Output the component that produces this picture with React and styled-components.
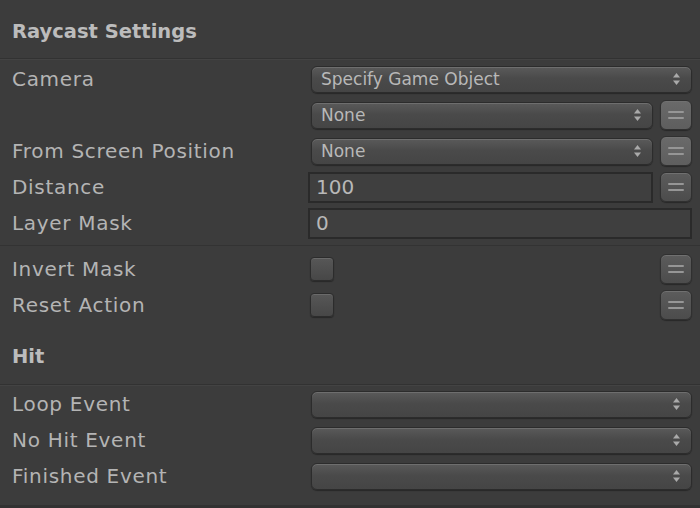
import React from "react";
import styled, { createGlobalStyle } from "styled-components";

const Global = createGlobalStyle`
  html, body {
    margin: 0;
    padding: 0;
    background: #3c3c3c;
  }
  body {
    font-family: "DejaVu Sans", "Liberation Sans", sans-serif;
    color: #b4b4b4;
  }
`;

const Panel = styled.div`
  width: 700px;
  height: 508px;
  background: #3c3c3c;
  display: flex;
  flex-direction: column;
  overflow: hidden;
  box-sizing: border-box;
  border-bottom: 3px solid #323232;
`;

const SectionHeader = styled.div`
  height: ${(p) => p.h}px;
  padding: ${(p) => p.pt}px 12px 0;
  box-sizing: border-box;
  display: flex;
  align-items: center;
  font-weight: bold;
  font-size: 19.5px;
  color: #bcbcbc;
  border-bottom: 1px solid #323232;
  box-shadow: 0 1px 0 #434343;
`;

const Group = styled.div`
  display: flex;
  flex-direction: column;
  padding: ${(p) => p.pad};
  border-bottom: ${(p) => (p.line ? "1px solid #333333" : "none")};
`;

const Row = styled.div`
  height: 36px;
  display: grid;
  grid-template-columns: 308px 1fr;
  align-items: center;
  padding-right: 8px;
`;

const Label = styled.div`
  padding-left: 12px;
  font-size: 20px;
  letter-spacing: 0.7px;
  color: #b4b4b4;
  white-space: nowrap;
`;

const Control = styled.div`
  display: flex;
  align-items: center;
  gap: 7px;
  height: 100%;
`;

const Popup = styled.div`
  flex: 1;
  height: 27px;
  margin-left: 3px;
  box-sizing: border-box;
  border-radius: 6px;
  border: 1px solid #2c2c2c;
  background: linear-gradient(#5a5a5a, #4a4a4a 45%, #454545);
  box-shadow: inset 0 1px 0 #6e6e6e, 0 1px 1px rgba(0, 0, 0, 0.35);
  display: flex;
  align-items: center;
  padding: 0 10px 0 9px;
  font-size: 17px;
  color: #b8b8b8;
`;

const PopupText = styled.span`
  flex: 1;
  white-space: nowrap;
`;

const Field = styled.div`
  flex: 1;
  height: 31px;
  box-sizing: border-box;
  border: 2px solid #2a2a2a;
  background: #3f3f3f;
  display: flex;
  align-items: center;
  padding-left: 6px;
  font-size: 20px;
  color: #b8b8b8;
`;

const MenuButton = styled.div`
  width: 32px;
  height: 30px;
  flex: none;
  box-sizing: border-box;
  border-radius: 6px;
  border: 1px solid #303030;
  background: ${(p) =>
    p.light
      ? "linear-gradient(#6a6a6a, #5e5e5e)"
      : "linear-gradient(#5c5c5c, #4c4c4c)"};
  box-shadow: inset 0 1px 0 #707070, 0 1px 1px rgba(0, 0, 0, 0.35);
  display: flex;
  flex-direction: column;
  align-items: center;
  justify-content: center;
  gap: 4px;

  &::before,
  &::after {
    content: "";
    width: 16px;
    height: 2px;
    border-radius: 1px;
    background: #969696;
  }
`;

const Spacer = styled.div`
  flex: 1;
`;

const Check = styled.div`
  width: 24px;
  height: 24px;
  margin-left: 2px;
  box-sizing: border-box;
  border-radius: 4px;
  border: 1px solid #2c2c2c;
  background: linear-gradient(#575757, #474747);
  box-shadow: inset 0 1px 0 #6a6a6a, 0 1px 1px rgba(0, 0, 0, 0.35);
`;

const Arrows = () => (
  <svg width="9" height="14" viewBox="0 0 9 14">
    <path d="M4.5 1 L8 5.5 L1 5.5 Z" fill="#aaaaaa" />
    <path d="M4.5 13 L8 8.5 L1 8.5 Z" fill="#aaaaaa" />
  </svg>
);

const Select = ({ children }) => (
  <Popup>
    <PopupText>{children}</PopupText>
    <Arrows />
  </Popup>
);

export default function App() {
  return (
    <>
      <Global />
      <Panel>
        <SectionHeader h={59} pt={5}>Raycast Settings</SectionHeader>
        <Group pad="2px 0 4px" line>
          <Row>
            <Label>Camera</Label>
            <Control>
              <Select>Specify Game Object</Select>
            </Control>
          </Row>
          <Row>
            <Label />
            <Control>
              <Select>None</Select>
              <MenuButton light />
            </Control>
          </Row>
          <Row>
            <Label>From Screen Position</Label>
            <Control>
              <Select>None</Select>
              <MenuButton light />
            </Control>
          </Row>
          <Row>
            <Label>Distance</Label>
            <Control>
              <Field>100</Field>
              <MenuButton />
            </Control>
          </Row>
          <Row>
            <Label>Layer Mask</Label>
            <Control>
              <Field>0</Field>
            </Control>
          </Row>
        </Group>
        <Group pad="5px 0 0">
          <Row>
            <Label>Invert Mask</Label>
            <Control>
              <Check />
              <Spacer />
              <MenuButton />
            </Control>
          </Row>
          <Row>
            <Label>Reset Action</Label>
            <Control>
              <Check />
              <Spacer />
              <MenuButton />
            </Control>
          </Row>
        </Group>
        <SectionHeader h={62} pt={5}>Hit</SectionHeader>
        <Group pad="1px 0 0">
          <Row>
            <Label>Loop Event</Label>
            <Control>
              <Select />
            </Control>
          </Row>
          <Row>
            <Label>No Hit Event</Label>
            <Control>
              <Select />
            </Control>
          </Row>
          <Row>
            <Label>Finished Event</Label>
            <Control>
              <Select />
            </Control>
          </Row>
        </Group>
      </Panel>
    </>
  );
}
